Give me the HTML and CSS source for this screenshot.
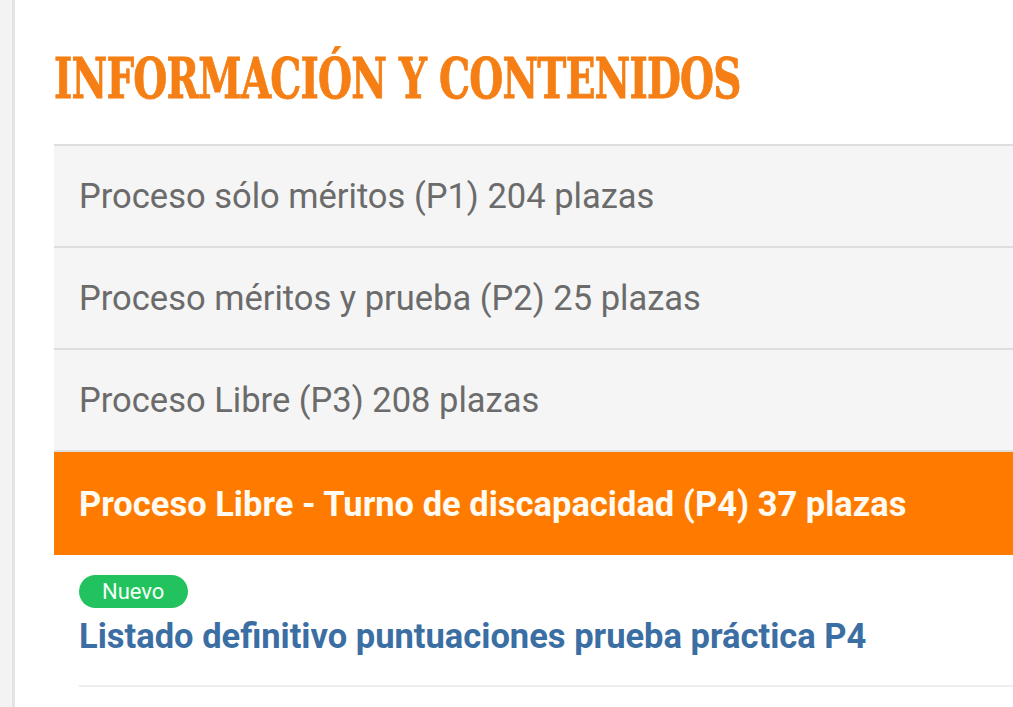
FILE: index.html
```html
<!DOCTYPE html>
<html lang="es">
<head>
<meta charset="utf-8">
<title>Información y contenidos</title>
<link rel="stylesheet" href="styles.css">
</head>
<body>
<div class="page">
  <aside class="rail"></aside>
  <main class="content">
    <h1 class="title"><span class="title-text">INFORMACIÓN Y CONTENIDOS</span></h1>
    <ul class="tabs">
      <li class="tab">Proceso sólo méritos (P1) 204 plazas</li>
      <li class="tab">Proceso méritos y prueba (P2) 25 plazas</li>
      <li class="tab">Proceso Libre (P3) 208 plazas</li>
      <li class="tab tab-active">Proceso Libre - Turno de discapacidad (P4) 37 plazas</li>
    </ul>
    <div class="entries">
      <div class="entry">
        <span class="badge">Nuevo</span>
        <a class="entry-link" href="#">Listado definitivo puntuaciones prueba práctica P4</a>
      </div>
    </div>
  </main>
</div>
</body>
</html>
```
FILE: styles.css
```css
html, body {
  margin: 0;
  padding: 0;
  background: #ffffff;
  font-family: Roboto, "Liberation Sans", Arial, sans-serif;
}
.page {
  display: flex;
  min-height: 707px;
  overflow: hidden;
}
.rail {
  flex: 0 0 12px;
  background: #f3f3f3;
  border-right: 3px solid #e3e3e3;
}
.content {
  flex: 1;
  padding-left: 39px;
  min-width: 0;
}
.title {
  margin: 0;
  padding-top: 50px;
  height: 144px;
  box-sizing: border-box;
  font-family: "DejaVu Serif Condensed", "DejaVu Serif", serif;
  font-weight: bold;
  font-size: 56px;
  line-height: 1;
  color: #f57f14;
  white-space: nowrap;
}
.title-text {
  display: inline-block;
  transform-origin: left center;
  transform: scaleX(0.775);
  letter-spacing: -1px;
  -webkit-text-stroke: 0.8px #f57f14;
}
.tabs {
  list-style: none;
  margin: 0;
  padding: 0;
  border-top: 2px solid #dedede;
}
.tab {
  height: 102px;
  box-sizing: border-box;
  display: flex;
  align-items: center;
  padding-left: 25px;
  background: #f5f5f5;
  border-bottom: 2px solid #dedede;
  color: #6b6b6b;
  font-size: 34.5px;
  white-space: nowrap;
}
.tab-active {
  background: #ff7b00;
  color: #fffaf2;
  font-weight: bold;
  border-bottom: 0;
  height: 103px;
}
.entries {
  padding-left: 25px;
}
.entry {
  display: flex;
  flex-direction: column;
  align-items: flex-start;
  padding-top: 20px;
  padding-bottom: 28px;
  border-bottom: 2px solid #eeeeee;
}
.badge {
  display: inline-block;
  height: 33px;
  line-height: 33px;
  padding: 0 24px 0 23px;
  border-radius: 17px;
  background: #22c35e;
  color: #f4fff6;
  font-size: 22px;
}
.entry-link {
  margin-top: 8px;
  color: #3b6ea3;
  font-weight: bold;
  font-size: 34.5px;
  line-height: 1.2;
  text-decoration: none;
  white-space: nowrap;
}
```
